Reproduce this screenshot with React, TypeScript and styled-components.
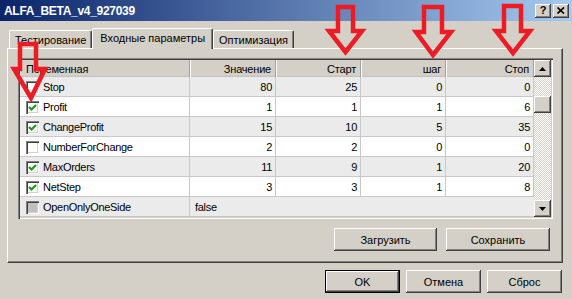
import React from 'react';
import styled, { createGlobalStyle, css } from 'styled-components';

const GlobalStyle = createGlobalStyle`
    html, body {
        margin: 0;
        padding: 0;
        background: #d4d0c8;
    }

    body {
        font-family: "Liberation Sans", Arial, sans-serif;
        font-size: 11px;
        color: #000;
    }
`;

const raised = css`
    box-shadow:
        inset -1px -1px #404040,
        inset 1px 1px #ffffff,
        inset -2px -2px #808080,
        inset 2px 2px #d4d0c8;
`;

const sunken = css`
    box-shadow:
        inset 1px 1px #808080,
        inset 2px 2px #404040,
        inset -1px -1px #ffffff,
        inset -2px -2px #d4d0c8;
`;

const Window = styled.div`
    position: relative;
    width: 572px;
    height: 299px;
    overflow: hidden;
    background: #d4d0c8;
    display: flex;
    flex-direction: column;
`;

const TitleBar = styled.div`
    flex: none;
    height: 21px;
    display: flex;
    align-items: center;
    justify-content: space-between;
    padding: 0 3px 0 4px;
    background: linear-gradient(to right, #0a246a, #a6caf0);
`;

const Title = styled.span`
    color: #fff;
    font-weight: bold;
    font-size: 12px;
    letter-spacing: -0.3px;
`;

const CaptionButtons = styled.div`
    display: flex;
    gap: 2px;
`;

const CaptionButton = styled.div`
    width: 16px;
    height: 14px;
    background: #d4d0c8;
    ${raised};
    display: flex;
    align-items: center;
    justify-content: center;
    font-weight: bold;
    font-size: 11px;
    line-height: 1;
`;

const Body = styled.div`
    padding: 7px 9px 0 7px;
`;

const TabStrip = styled.div`
    height: 20px;
    display: flex;
    align-items: flex-end;
    padding-left: 2px;
`;

const Tab = styled.div<{ $active?: boolean }>`
    position: relative;
    z-index: ${(p) => (p.$active ? 1 : 0)};
    height: ${(p) => (p.$active ? 21 : 18)}px;
    margin-bottom: ${(p) => (p.$active ? -1 : 0)}px;
    padding: 0 ${(p) => (p.$active ? 7 : 5)}px;
    padding-bottom: ${(p) => (p.$active ? 3 : 0)}px;
    box-sizing: border-box;
    display: flex;
    align-items: center;
    background: #d4d0c8;
    border-top: 1px solid #fff;
    border-left: 1px solid #fff;
    border-right: 1px solid #404040;
    border-radius: 2px 2px 0 0;
    box-shadow: inset -1px 0 #808080;
    white-space: nowrap;
`;

const Panel = styled.div`
    height: 215px;
    box-sizing: border-box;
    border-top: 1px solid #fff;
    border-left: 1px solid #fff;
    border-right: 1px solid #404040;
    border-bottom: 1px solid #404040;
    box-shadow: inset -1px -1px #808080;
    padding: 9px 9px 0 10px;
`;

const GridFrame = styled.div`
    width: 535px;
    height: 161px;
    box-sizing: border-box;
    padding: 2px;
    ${sunken};
    display: flex;
`;

const Table = styled.div`
    width: 514px;
    display: grid;
    grid-template-columns: 170px 86px 85px 85px 88px;
    grid-template-rows: 17px repeat(7, 20px);
    background: #fff;
`;

const HeadCell = styled.div<{ $left?: boolean }>`
    background: #d4d0c8;
    display: flex;
    align-items: center;
    justify-content: ${(p) => (p.$left ? 'flex-start' : 'flex-end')};
    padding: 0 5px 0 6px;
    box-shadow:
        inset 1px 0 #ffffff,
        inset -1px 0 #a0a0a0,
        inset 0 -1px #c0c0c0;
    letter-spacing: -0.2px;
`;

const Cell = styled.div<{ $odd: boolean; $left?: boolean; $span?: number }>`
    background: ${(p) => (p.$odd ? '#ebebeb' : '#ffffff')};
    grid-column: ${(p) => (p.$span ? `span ${p.$span}` : 'auto')};
    display: flex;
    align-items: center;
    justify-content: ${(p) => (p.$left ? 'flex-start' : 'flex-end')};
    padding: 0 4px 0 5px;
    box-shadow: ${(p) => (p.$span ? 'inset 0 -1px #c8c8c8' : 'inset -1px -1px #c8c8c8')};
    letter-spacing: -0.3px;
`;

const NameCell = styled(Cell)`
    gap: 4px;
    padding-left: 6px;
`;

const Check = styled.div<{ $disabled?: boolean }>`
    flex: none;
    width: 13px;
    height: 13px;
    background: ${(p) => (p.$disabled ? '#c0c0c0' : '#ffffff')};
    ${sunken};
    display: flex;
    align-items: center;
    justify-content: center;
`;

const ScrollBar = styled.div`
    width: 17px;
    display: flex;
    flex-direction: column;
`;

const ScrollButton = styled.div`
    flex: none;
    height: 17px;
    background: #d4d0c8;
    ${raised};
    display: flex;
    align-items: center;
    justify-content: center;
`;

const Track = styled.div`
    flex: 1;
    background-color: #d4d0c8;
    background-image: repeating-conic-gradient(#ffffff 0 25%, #d4d0c8 0 50%);
    background-size: 2px 2px;
`;

const Thumb = styled.div`
    margin-top: 19px;
    height: 17px;
    background: #d4d0c8;
    ${raised};
`;

const ButtonRow = styled.div<{ $gap: number; $top: number; $right: number }>`
    display: flex;
    justify-content: flex-end;
    gap: ${(p) => p.$gap}px;
    margin-top: ${(p) => p.$top}px;
    padding-right: ${(p) => p.$right}px;
`;

const Button = styled.div<{ $width: number; $default?: boolean }>`
    width: ${(p) => p.$width}px;
    height: 23px;
    box-sizing: border-box;
    background: #d4d0c8;
    display: flex;
    align-items: center;
    justify-content: center;
    ${(p) =>
        p.$default
            ? css`
                  border: 1px solid #000;
                  ${raised};
              `
            : raised};
`;

const Annotations = styled.svg`
    position: absolute;
    inset: 0;
    pointer-events: none;
`;

type Row = {
    name: string;
    checked?: boolean;
    disabled?: boolean;
    values: string[];
};

const rows: Row[] = [
    { name: 'Stop', values: ['80', '25', '0', '0'] },
    { name: 'Profit', checked: true, values: ['1', '1', '1', '6'] },
    { name: 'ChangeProfit', checked: true, values: ['15', '10', '5', '35'] },
    { name: 'NumberForChange', values: ['2', '2', '0', '0'] },
    { name: 'MaxOrders', checked: true, values: ['11', '9', '1', '20'] },
    { name: 'NetStep', checked: true, values: ['3', '3', '1', '8'] },
    { name: 'OpenOnlyOneSide', disabled: true, values: ['false'] },
];

// red marker arrows drawn over the screenshot
const arrows = [
    '20,44 36,44 36,69 45,69 31,98 14,69 20,69',
    '338,7 353,7 353,31 362,31 345.5,52 329,31 338,31',
    '424,7 442,7 442,32 451,32 433,55 416,32 424,32',
    '504,6 521,6 521,31 530,31 513,53 496,31 504,31',
];

const Tick = () => (
    <svg width="9" height="9" viewBox="0 0 9 9">
        <polyline points="1,4 3.5,6.5 8,2" fill="none" stroke="#119911" strokeWidth="2" />
    </svg>
);

const Triangle = ({ down }: { down?: boolean }) => (
    <svg width="7" height="4" viewBox="0 0 7 4">
        <polygon points={down ? '0,0 7,0 3.5,4' : '0,4 7,4 3.5,0'} fill="#000" />
    </svg>
);

const TesterSettings = () => {
    return (
        <Window>
            <TitleBar>
                <Title>ALFA_BETA_v4_927039</Title>
                <CaptionButtons>
                    <CaptionButton>?</CaptionButton>
                    <CaptionButton>
                        <svg width="8" height="7" viewBox="0 0 8 7">
                            <path d="M0.5,0.5 L7,6.5 M7,0.5 L0.5,6.5" stroke="#000" strokeWidth="1.7" />
                        </svg>
                    </CaptionButton>
                </CaptionButtons>
            </TitleBar>
            <Body>
                <TabStrip>
                    <Tab>Тестирование</Tab>
                    <Tab $active>Входные параметры</Tab>
                    <Tab>Оптимизация</Tab>
                </TabStrip>
                <Panel>
                    <GridFrame>
                        <Table>
                            <HeadCell $left>Переменная</HeadCell>
                            <HeadCell>Значение</HeadCell>
                            <HeadCell>Старт</HeadCell>
                            <HeadCell>шаг</HeadCell>
                            <HeadCell>Стоп</HeadCell>
                            {rows.map((row, i) => {
                                const odd = i % 2 === 0;
                                return (
                                    <React.Fragment key={row.name}>
                                        <NameCell $odd={odd} $left>
                                            <Check $disabled={row.disabled}>
                                                {row.checked && <Tick />}
                                            </Check>
                                            {row.name}
                                        </NameCell>
                                        {row.disabled ? (
                                            <Cell $odd={odd} $left $span={4}>
                                                {row.values[0]}
                                            </Cell>
                                        ) : (
                                            row.values.map((v, j) => (
                                                <Cell key={j} $odd={odd}>
                                                    {v}
                                                </Cell>
                                            ))
                                        )}
                                    </React.Fragment>
                                );
                            })}
                        </Table>
                        <ScrollBar>
                            <ScrollButton>
                                <Triangle />
                            </ScrollButton>
                            <Track>
                                <Thumb />
                            </Track>
                            <ScrollButton>
                                <Triangle down />
                            </ScrollButton>
                        </ScrollBar>
                    </GridFrame>
                    <ButtonRow $gap={9} $top={9} $right={3}>
                        <Button $width={103}>Загрузить</Button>
                        <Button $width={104}>Сохранить</Button>
                    </ButtonRow>
                </Panel>
                <ButtonRow $gap={6} $top={7} $right={1}>
                    <Button $width={75} $default>OK</Button>
                    <Button $width={75}>Отмена</Button>
                    <Button $width={75}>Сброс</Button>
                </ButtonRow>
            </Body>
            <Annotations width="572" height="299" viewBox="0 0 572 299">
                {arrows.map((points, i) => (
                    <polygon
                        key={i}
                        points={points}
                        fill="none"
                        stroke="#ed1c24"
                        strokeWidth="4.5"
                        strokeLinejoin="miter"
                    />
                ))}
            </Annotations>
        </Window>
    );
};

const App = () => (
    <>
        <GlobalStyle />
        <TesterSettings />
    </>
);

export default App;
